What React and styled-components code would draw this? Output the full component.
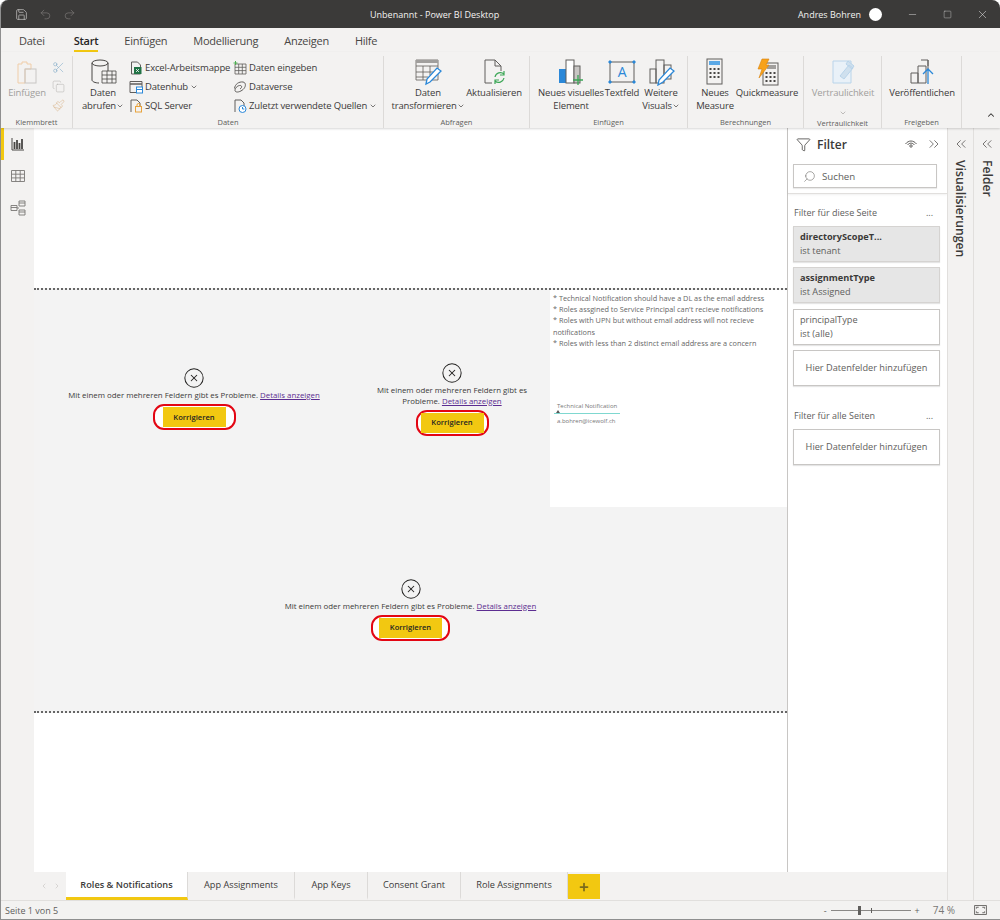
import React from "react";
import styled, { createGlobalStyle } from "styled-components";
import { ChevronDown, ChevronUp, ChevronsLeft, ChevronsRight, CircleX, Copy, Minus, Paintbrush, Redo2, Save, Scissors, Search, Square, Undo2, X, Plus, ChevronLeft, ChevronRight, Funnel } from "lucide-react";

const Global = createGlobalStyle`
html, body { margin: 0; padding: 0; width: 1000px; height: 920px; overflow: hidden; background: #fff; }
* { box-sizing: border-box; }
body { font-family: "Open Sans", "Liberation Sans", sans-serif; color: #333; }
`

const Window = styled.div`
width: 1000px;
height: 920px;
display: flex;
flex-direction: column;
background: #f3f2f1;
border-radius: 8px 8px 0 0;
border-left: 1px solid #8f8f8f;
border-bottom: 1px solid #8f8f8f;
overflow: hidden;
`

const TitleBar = styled.div`
height: 28px;
flex: none;
background: #3b3a39;
color: #f3f2f1;
display: flex;
align-items: center;
font-size: 9px;
padding-left: 14px;
`

const QuickIcons = styled.div`
width: 355px;
display: flex;
gap: 11px;
align-items: center;
color: #7a7876;
& svg:first-child { color: #c8c6c4; }
`

const UserName = styled.span`
margin-left: auto;
margin-right: 8px;
`

const Avatar = styled.span`
width: 13px;
height: 13px;
border-radius: 50%;
background: #fff;
margin-right: 13px;
`

const WinButton = styled.span`
width: 35px;
display: flex;
justify-content: center;
color: #e8e8e8;
`

const MenuBar = styled.div`
height: 24px;
flex: none;
display: flex;
gap: 26px;
padding-left: 18px;
font-size: 11px;
letter-spacing: -0.25px;
& > div:first-child { margin-right: 3px; }
`

const MenuItem = styled.div`
height: 24px;
padding-top: 5px;
line-height: 16px;
font-weight: ${p => p.$active ? 600 : 400};
color: ${p => p.$active ? "#252423" : "#484644"};
border-bottom: 2px solid ${p => p.$active ? "#f2c811" : "transparent"};
`

const Ribbon = styled.div`
height: 76px;
flex: none;
display: flex;
padding-top: 4px;
box-shadow: 0 1px 2px rgba(0,0,0,0.16);
position: relative;
z-index: 2;
`

const Group = styled.div`
width: ${p => p.$w}px;
flex: none;
display: flex;
flex-direction: column;
border-right: 1px solid #dcdad8;
`

const GroupBody = styled.div`
height: 61px;
display: flex;
padding-left: ${p => p.$pad || 0}px;
padding-top: 2px;
`

const GroupLabel = styled.div`
text-align: center;
font-size: 7.5px;
line-height: 12px;
color: #605e5c;
`

const Large = styled.div`
width: ${p => p.$w}px;
flex: none;
display: flex;
flex-direction: column;
align-items: center;
font-size: 9.5px;
line-height: 13px;
letter-spacing: -0.15px;
white-space: nowrap;
text-align: center;
color: ${p => p.$off ? "#a19f9d" : "#3b3a39"};
& > svg { height: 28px; flex: none; }
`

const SmallColumn = styled.div`
width: ${p => p.$w}px;
flex: none;
display: flex;
flex-direction: column;
`

const SmallRow = styled.div`
height: 19px;
display: flex;
align-items: center;
gap: 2px;
margin-left: -1px;
font-size: 9.5px;
letter-spacing: -0.15px;
white-space: nowrap;
color: #3b3a39;
`

const ToolIcon = styled.div`
height: 19px;
display: flex;
align-items: center;
justify-content: center;
color: #b5b3b1;
`

const Caret = styled.div`
margin-left: auto;
align-self: flex-end;
padding: 0 4px 3px 0;
color: #323130;
`

const Main = styled.div`
height: 772px;
flex: none;
display: flex;
`

const Rail = styled.div`
width: 33px;
flex: none;
display: flex;
flex-direction: column;
`

const RailItem = styled.div`
height: 32px;
display: flex;
align-items: center;
justify-content: center;
color: #797775;
border-left: 3px solid ${p => p.$active ? "#f2c811" : "transparent"};
padding-right: 3px;
`

const Center = styled.div`
width: 913px;
flex: none;
display: flex;
flex-direction: column;
`

const Work = styled.div`
height: 744px;
flex: none;
display: flex;
`

const Canvas = styled.div`
width: 753px;
flex: none;
background: #fff;
padding-top: 160px;
`

const ReportPage = styled.div`
height: 425px;
display: flex;
flex-direction: column;
background: #f3f3f3;
border-top: 2px dotted #666;
border-bottom: 2px dotted #666;
`

const TopRow = styled.div`
height: 217px;
flex: none;
display: flex;
`

const ErrorCard = styled.div`
width: ${p => p.$w ? `${p.$w}px` : "100%"};
flex: ${p => p.$w ? "none" : 1};
display: flex;
flex-direction: column;
align-items: center;
justify-content: center;
padding: 0 20px;
color: #3b3a39;
text-align: center;
font-size: 7.85px;
line-height: 11px;
`

const ErrorText = styled.div`
margin: 1px 0 3px;
`

const DetailLink = styled.span`
color: #5c2d91;
text-decoration: underline;
`

const FixRing = styled.div`
display: flex;
padding: 1px ${p => p.$pad}px;
border: 2px solid #e30613;
border-radius: 11px;
background: #fff;
`

const FixButton = styled.div`
width: 63px;
height: 20px;
display: flex;
align-items: center;
justify-content: center;
background: #f2c811;
color: #252423;
font-size: 7.6px;
font-weight: 600;
`

const NoteCard = styled.div`
flex: 1;
background: #fff;
padding: 3px 3px 0;
font-size: 7.3px;
line-height: 11.2px;
color: #666;
`

const NoteLines = styled.div`
height: 108px;
`

const MiniTable = styled.div`
margin-left: 4px;
font-size: 6px;
line-height: 10px;
color: #777;
white-space: nowrap;
`

const MiniHead = styled.div`
width: 66px;
margin-left: -3px;
padding: 0 0 2px 3px;
border-bottom: 1px solid #7fd8d0;
position: relative;
&::after {
    content: '';
    position: absolute;
    left: 2px;
    bottom: 0;
    border: 2px solid transparent;
    border-bottom: 3px solid #555;
    border-top: 0;
}
`

const MiniCell = styled.div`
padding-top: 2px;
`

const FilterPane = styled.div`
width: 160px;
flex: none;
background: #fff;
border-left: 1px solid #c8c6c4;
`

const PaneTop = styled.div`
height: 66px;
border-bottom: 1px solid #e1dfdd;
box-shadow: 0 1px 2px rgba(0,0,0,0.06);
padding: 0 5px;
`

const PaneHead = styled.div`
height: 36px;
display: flex;
align-items: center;
gap: 6px;
padding: 0 0 4px 3px;
color: #484644;
`

const PaneTitle = styled.div`
flex: 1;
font-size: 12px;
font-weight: 600;
color: #3b3a39;
`

const SearchBox = styled.div`
width: 144px;
height: 24px;
border: 1px solid #c8c6c4;
display: flex;
align-items: center;
gap: 6px;
padding-left: 9px;
font-size: 9.7px;
color: #605e5c;
box-shadow: 0 1px 1px rgba(0,0,0,0.08);
`

const PaneBody = styled.div`
padding: 11px 5px 0;
display: flex;
flex-direction: column;
gap: 5.5px;
`

const SectionHead = styled.div`
height: 14px;
margin-bottom: 1px;
margin-top: ${p => p.$gap || 0}px;
display: flex;
justify-content: space-between;
align-items: center;
padding: 0 9px 0 1px;
font-size: 9px;
color: #605e5c;
`

const FilterCard = styled.div`
width: 147px;
height: 36px;
padding: 3px 6px;
font-size: 9.2px;
line-height: 14px;
border: 1px solid ${p => p.$on ? "#d5d3d1" : "#c8c6c4"};
background: ${p => p.$on ? "#e6e6e6" : "#fff"};
color: #605e5c;
box-shadow: 0 1px 1px rgba(0,0,0,0.1);
`

const CardName = styled.div`
font-weight: ${p => p.$on ? 700 : 400};
color: ${p => p.$on ? "#3b3a39" : "#605e5c"};
`

const DropCard = styled(FilterCard)`
display: flex;
align-items: center;
justify-content: center;
padding: 0;
`

const TabBar = styled.div`
height: 28px;
flex: none;
display: flex;
align-items: stretch;
`

const TabNav = styled.div`
width: 32px;
display: flex;
align-items: center;
justify-content: center;
gap: 5px;
color: #c8c6c4;
`

const Tab = styled.div`
width: ${p => p.$w}px;
flex: none;
display: flex;
align-items: center;
justify-content: center;
font-size: 9.2px;
font-weight: ${p => p.$active ? 600 : 400};
color: #3b3a39;
background: ${p => p.$active ? "#fff" : "transparent"};
border-right: 1px solid #dcdad8;
border-bottom: 3px solid ${p => p.$active ? "#f2c811" : "transparent"};
`

const AddTab = styled.div`
width: 32px;
height: 25px;
margin-top: 2px;
display: flex;
align-items: center;
justify-content: center;
background: #f2c811;
color: #7a6a1c;
`

const SidePane = styled.div`
width: ${p => p.$w}px;
flex: none;
display: flex;
flex-direction: column;
align-items: center;
padding-top: 8px;
border-left: 1px solid #e1dfdd;
color: #484644;
`

const SideLabel = styled.div`
writing-mode: vertical-rl;
margin-top: 8px;
font-size: 12.2px;
font-weight: 600;
color: #3b3a39;
`

const StatusBar = styled.div`
flex: 1;
display: flex;
align-items: center;
padding-left: 4px;
font-size: 9px;
color: #605e5c;
border-top: 1px solid #e1dfdd;
`

const ZoomTools = styled.div`
margin-left: auto;
display: flex;
align-items: center;
gap: 4px;
padding-right: 13px;
`

const SliderTrack = styled.div`
width: 80px;
height: 1px;
background: #8a8886;
position: relative;
`

const SliderThumb = styled.div`
position: absolute;
left: 27px;
top: -4px;
width: 3px;
height: 9px;
background: #605e5c;
`

const SliderTick = styled.div`
position: absolute;
left: 40px;
top: -2px;
width: 1px;
height: 5px;
background: #605e5c;
`

const ZoomValue = styled.span`
margin: 0 15px 0 9px;
color: #797775;
font-size: 10px;
`

const gray = "#605e5c";

const PasteIcon = () => (
    <svg width="30" viewBox="0 0 30 28" fill="none">
        <path d="M6 6h4V4h5v2h4v5h-6v14H6z" stroke="#f0cda8" />
        <rect x="13" y="11" width="11" height="14" stroke="#c8c6c4" />
    </svg>
)

const DatabaseIcon = () => (
    <svg width="30" viewBox="0 0 30 28" fill="none" stroke="#484644">
        <ellipse cx="12" cy="5" rx="8" ry="3" />
        <path d="M4 5v17c0 1.5 3 3 7 3M20 5v8" />
        <path d="M14 13h14v12H14zM14 17h14M14 21h14M19 13v12M24 13v12" strokeWidth=".8" />
    </svg>
)

const ExcelIcon = () => (
    <svg width="14" height="14" viewBox="0 0 14 14" fill="none">
        <path d="M2.5 1h6l3 3v9h-9z" stroke="#605e5c" />
        <rect x="5" y="6" width="7.5" height="7" fill="#217346" />
        <path d="M7 8l3 3M10 8l-3 3" stroke="#fff" strokeWidth=".8" />
    </svg>
)

const HubIcon = () => (
    <svg width="14" height="14" viewBox="0 0 14 14" fill="none">
        <path d="M1 1.5h12v11H1z" stroke="#605e5c" />
        <path d="M1 4h12" stroke="#605e5c" strokeWidth="1.4" />
        <rect x="7.5" y="7" width="6" height="6" stroke="#2b88d8" fill="#fff" />
        <path d="M7.5 9.5h6" stroke="#2b88d8" />
    </svg>
)

const SqlIcon = () => (
    <svg width="14" height="14" viewBox="0 0 14 14" fill="none">
        <path d="M2 13V1h6l3 3v3" stroke="#605e5c" />
        <rect x="6.5" y="7.5" width="6" height="5.5" stroke="#e8a33d" />
        <path d="M8 7.5V6a1.5 1.5 0 013 0v1.5" stroke="#e8a33d" />
    </svg>
)

const EnterDataIcon = () => (
    <svg width="14" height="14" viewBox="0 0 14 14" fill="none">
        <path d="M2 3h11v10H2zM2 6.3h11M2 9.6h11M5.7 3v10M9.3 3v10" stroke="#605e5c" strokeWidth=".8" />
        <path d="M2.5 0v4M.5 2h4" stroke="#4caf50" />
    </svg>
)

const SwirlIcon = () => (
    <svg width="14" height="14" viewBox="0 0 14 14" fill="none" stroke="#605e5c">
        <path d="M1.5 8.5C2 4 6 1.5 10 2c3 .5 3 4 1 6.5-2 2.5-6.5 4.5-8.5 3C1 10.500 3 6 6.500 5.500 9 5 9.500 7.500 7 9" />
    </svg>
)

const RecentIcon = () => (
    <svg width="14" height="14" viewBox="0 0 14 14" fill="none">
        <path d="M2 13V1h6l3 3v3" stroke="#605e5c" />
        <circle cx="9.500" cy="10" r="3.500" stroke="#2b88d8" fill="#fff" />
        <path d="M9.500 8v2h1.800" stroke="#2b88d8" />
    </svg>
)

const TransformIcon = () => (
    <svg width="30" viewBox="0 0 30 28" fill="none">
        <path d="M3 2h22v20H3zM3 8h22M3 14h18M3 19h12M10 8v14M17 8v9" stroke={gray} strokeWidth=".8" />
        <path d="M3 2h22v3H3z" fill="#a19f9d" />
        <path d="M13 26l1-5L24 10l4 3-11 11z" fill="#fff" stroke="#2b88d8" strokeWidth="1.3" />
    </svg>
)

const RefreshIcon = () => (
    <svg width="30" viewBox="0 0 30 28" fill="none">
        <path d="M6 25V2h10l6 6v5M6 25h7M16 2v6h6" stroke={gray} />
        <path d="M16 19a5.500 5.500 0 019-3M25 20a5.500 5.500 0 01-9 3M25 13v4h-4M16 26v-4h4" stroke="#3aa655" strokeWidth="1.2" />
    </svg>
)

const NewVisualIcon = () => (
    <svg width="30" viewBox="0 0 30 28" fill="none">
        <rect x="3" y="11" width="7" height="14" fill="#2b88d8" />
        <rect x="10" y="2" width="8" height="23" fill="#fff" stroke={gray} />
        <rect x="18" y="8" width="6" height="17" fill="#c8c6c4" stroke={gray} />
        <path d="M22 17v10M17 22h10" stroke="#3aa655" strokeWidth="1.3" />
    </svg>
)

const TextBoxIcon = () => (
    <svg width="30" viewBox="0 0 30 28" fill="none">
        <rect x="3" y="4" width="24" height="20" stroke={gray} />
        <text x="15" y="19" textAnchor="middle" fontSize="14" fontFamily="Open Sans, sans-serif" fill="#2b88d8">A</text>
        <path d="M2 3h2v2H2zM26 3h2v2h-2zM2 23h2v2H2zM26 23h2v2h-2z" fill="#2b88d8" stroke="#2b88d8" />
    </svg>
)

const MoreVisualsIcon = () => (
    <svg width="30" viewBox="0 0 30 28" fill="none">
        <rect x="4" y="11" width="6" height="14" stroke={gray} />
        <rect x="10" y="2" width="8" height="23" stroke={gray} />
        <rect x="18" y="7" width="7" height="14" stroke={gray} />
        <path d="M12 27l1-5L24 10l4 3-11 11z" fill="#fff" stroke="#2b88d8" strokeWidth="1.3" />
    </svg>
)

const CalcKeys = ({ x, y }) => (
    <path transform={`translate(${x} ${y})`} d="M0 0h2v2H0zM4 0h2v2H4zM8 0h2v2H8zM0 4h2v2H0zM4 4h2v2H4zM8 4h2v2H8zM0 8h2v2H0zM4 8h2v2H4zM8 8h2v2H8z" fill="#484644" />
)

const MeasureIcon = () => (
    <svg width="30" viewBox="0 0 30 28" fill="none">
        <rect x="7" y="1" width="15" height="25" stroke={gray} />
        <rect x="9" y="3" width="11" height="4" fill="#5ca9e6" />
        <CalcKeys x={9.5} y={10} />
    </svg>
)

const QuickIcon = () => (
    <svg width="30" viewBox="0 0 30 28" fill="none">
        <rect x="11" y="5" width="15" height="22" stroke={gray} />
        <rect x="15" y="7" width="9" height="4" fill="#a19f9d" />
        <CalcKeys x={13.5} y={14} />
        <path d="M10 1h7l-3 6h3L7 20l3-9H6z" fill="#f7a21b" stroke="#d9820b" strokeWidth=".6" />
    </svg>
)

const SensitivityIcon = () => (
    <svg width="30" viewBox="0 0 30 28" fill="none" stroke="#b9d4ea">
        <path d="M5 3h18v22H5z" fill="#e9f1f8" />
        <path d="M12 18l9-11 4 3-9 11zM20 3l6 5-2 3-6-5z" fill="#cfe0ee" />
    </svg>
)

const PublishIcon = () => (
    <svg width="30" viewBox="0 0 30 28" fill="none">
        <path d="M4 15h7v10H4zM11 8h8v17h-8zM14 2h7v6" stroke={gray} />
        <path d="M21 2v10" stroke={gray} />
        <path d="M21 26V12M16 16l5-5 5 5" stroke="#2b88d8" strokeWidth="1.3" />
    </svg>
)

const EyeIcon = () => (
    <svg width="14" height="12" viewBox="0 0 14 12" fill="none" stroke="#605e5c">
        <path d="M1.500 6c3-4 8-4 11 0M3.500 7c2-2.500 5-2.500 7 0" />
        <circle cx="7" cy="8" r="1.200" />
    </svg>
)

const ReportIcon = () => (
    <svg width="14" height="14" viewBox="0 0 14 14" fill="none" stroke="#484644">
        <path d="M1 1v12h12" />
        <path d="M3.500 12V5M6 12V3M8.500 12V6M11 12V2" strokeWidth="1.800" />
    </svg>
)

const TableIcon = () => (
    <svg width="14" height="14" viewBox="0 0 14 14" fill="none" stroke="currentColor" strokeWidth=".9">
        <path d="M.5 1.500h13v11H.5zM.5 5.200h13M.5 8.900h13M4.800 1.500v11M9.200 1.500v11" />
    </svg>
)

const ModelIcon = () => (
    <svg width="16" height="16" viewBox="0 0 16 16" fill="none" stroke="currentColor" strokeWidth=".9">
        <path d="M9 1h6v5H9zM9 3h6M1 5.500h6v5H1zM1 7.500h6M9 10h6v5H9zM9 12h6M7 8h2" />
    </svg>
)

const FitIcon = () => (
    <svg width="13" height="10" viewBox="0 0 14 11" fill="none" stroke="#605e5c">
        <path d="M.5.500h13v10H.500z" />
        <path d="M2.500 4V2.500H5M9 2.500h2.500V4M2.500 7v1.500H5M9 8.500h2.500V7" />
    </svg>
)

const Chevron = () => <ChevronDown size={8} strokeWidth={2} style={{ verticalAlign: "-1px" }} />

const ErrorVisual = ({ w, ring }) => (
    <ErrorCard $w={w}>
        <CircleX size={22} strokeWidth={1.1} color="#252423" />
        <ErrorText>
            Mit einem oder mehreren Feldern gibt es Probleme. <DetailLink>Details anzeigen</DetailLink>
        </ErrorText>
        <FixRing $pad={ring}>
            <FixButton>Korrigieren</FixButton>
        </FixRing>
    </ErrorCard>
)

const menuItems = ["Datei", "Start", "Einfügen", "Modellierung", "Anzeigen", "Hilfe"];

const tabs = [
    { name: "Roles & Notifications", w: 122, active: true },
    { name: "App Assignments", w: 107 },
    { name: "App Keys", w: 73 },
    { name: "Consent Grant", w: 93 },
    { name: "Role Assignments", w: 107 },
];

const App = () => {
    return (
        <Window>
            <Global />
            <TitleBar>
                <QuickIcons>
                    <Save size={13} strokeWidth={1.3} />
                    <Undo2 size={13} strokeWidth={1.3} />
                    <Redo2 size={13} strokeWidth={1.3} />
                </QuickIcons>
                <span>Unbenannt - Power BI Desktop</span>
                <UserName>Andres Bohren</UserName>
                <Avatar />
                <WinButton><Minus size={11} strokeWidth={1} /></WinButton>
                <WinButton><Square size={9} strokeWidth={1} /></WinButton>
                <WinButton><X size={13} strokeWidth={1} /></WinButton>
            </TitleBar>

            <MenuBar>
                {menuItems.map(m => <MenuItem key={m} $active={m === "Start"}>{m}</MenuItem>)}
            </MenuBar>

            <Ribbon>
                <Group $w={72}>
                    <GroupBody $pad={3}>
                        <Large $w={46} $off><PasteIcon />Einfügen</Large>
                        <SmallColumn $w={16}>
                            <ToolIcon><Scissors size={13} strokeWidth={1} color="#7aa7c7" /></ToolIcon>
                            <ToolIcon><Copy size={13} strokeWidth={1} /></ToolIcon>
                            <ToolIcon><Paintbrush size={13} strokeWidth={1} color="#d9b48a" /></ToolIcon>
                        </SmallColumn>
                    </GroupBody>
                    <GroupLabel>Klemmbrett</GroupLabel>
                </Group>
                <Group $w={311}>
                    <GroupBody $pad={3}>
                        <Large $w={54}><DatabaseIcon />Daten<span>abrufen<Chevron /></span></Large>
                        <SmallColumn $w={104}>
                            <SmallRow><ExcelIcon />Excel-Arbeitsmappe</SmallRow>
                            <SmallRow><HubIcon />Datenhub <Chevron /></SmallRow>
                            <SmallRow><SqlIcon />SQL Server</SmallRow>
                        </SmallColumn>
                        <SmallColumn $w={148}>
                            <SmallRow><EnterDataIcon />Daten eingeben</SmallRow>
                            <SmallRow><SwirlIcon />Dataverse</SmallRow>
                            <SmallRow><RecentIcon />Zuletzt verwendete Quellen <Chevron /></SmallRow>
                        </SmallColumn>
                    </GroupBody>
                    <GroupLabel>Daten</GroupLabel>
                </Group>
                <Group $w={146}>
                    <GroupBody $pad={4}>
                        <Large $w={80}><TransformIcon />Daten<span>transformieren<Chevron /></span></Large>
                        <Large $w={52}><RefreshIcon />Aktualisieren</Large>
                    </GroupBody>
                    <GroupLabel>Abfragen</GroupLabel>
                </Group>
                <Group $w={158}>
                    <GroupBody $pad={6}>
                        <Large $w={70}><NewVisualIcon />Neues visuelles<br />Element</Large>
                        <Large $w={32}><TextBoxIcon />Textfeld</Large>
                        <Large $w={46}><MoreVisualsIcon />Weitere<span>Visuals<Chevron /></span></Large>
                    </GroupBody>
                    <GroupLabel>Einfügen</GroupLabel>
                </Group>
                <Group $w={116}>
                    <GroupBody $pad={4}>
                        <Large $w={46}><MeasureIcon />Neues<br />Measure</Large>
                        <Large $w={58}><QuickIcon />Quickmeasure</Large>
                    </GroupBody>
                    <GroupLabel>Berechnungen</GroupLabel>
                </Group>
                <Group $w={78}>
                    <GroupBody>
                        <Large $w={78} $off><SensitivityIcon />Vertraulichkeit<Chevron /></Large>
                    </GroupBody>
                    <GroupLabel>Vertraulichkeit</GroupLabel>
                </Group>
                <Group $w={80}>
                    <GroupBody>
                        <Large $w={80}><PublishIcon />Veröffentlichen</Large>
                    </GroupBody>
                    <GroupLabel>Freigeben</GroupLabel>
                </Group>
                <Caret><ChevronUp size={10} strokeWidth={2.5} /></Caret>
            </Ribbon>

            <Main>
                <Rail>
                    <RailItem $active><ReportIcon /></RailItem>
                    <RailItem><TableIcon /></RailItem>
                    <RailItem><ModelIcon /></RailItem>
                </Rail>

                <Center>
                    <Work>
                        <Canvas>
                            <ReportPage>
                                <TopRow>
                                    <ErrorVisual w={320} ring={8} />
                                    <ErrorVisual w={196} ring={3} />
                                    <NoteCard>
                                        <NoteLines>
                                            * Technical Notification should have a DL as the email address<br />
                                            * Roles assgined to Service Principal can't recieve notifications<br />
                                            * Roles with UPN but without email address will not recieve notifications<br />
                                            * Roles with less than 2 distinct email address are a concern
                                        </NoteLines>
                                        <MiniTable>
                                            <MiniHead>Technical Notification</MiniHead>
                                            <MiniCell>a.bohren@icewolf.ch</MiniCell>
                                        </MiniTable>
                                    </NoteCard>
                                </TopRow>
                                <ErrorVisual ring={6} />
                            </ReportPage>
                        </Canvas>

                        <FilterPane>
                            <PaneTop>
                                <PaneHead>
                                    <Funnel size={15} strokeWidth={1.3} />
                                    <PaneTitle>Filter</PaneTitle>
                                    <EyeIcon />
                                    <ChevronsRight size={16} strokeWidth={1.1} style={{ marginLeft: 2 }} />
                                </PaneHead>
                                <SearchBox>
                                    <Search size={13} strokeWidth={1} style={{ transform: "scaleX(-1)" }} />
                                    Suchen
                                </SearchBox>
                            </PaneTop>
                            <PaneBody>
                                <SectionHead>Filter für diese Seite<span>...</span></SectionHead>
                                <FilterCard $on>
                                    <CardName $on>directoryScopeT...</CardName>
                                    ist tenant
                                </FilterCard>
                                <FilterCard $on>
                                    <CardName $on>assignmentType</CardName>
                                    ist Assigned
                                </FilterCard>
                                <FilterCard>
                                    <CardName>principalType</CardName>
                                    ist (alle)
                                </FilterCard>
                                <DropCard>Hier Datenfelder hinzufügen</DropCard>
                                <SectionHead $gap={17}>Filter für alle Seiten<span>...</span></SectionHead>
                                <DropCard>Hier Datenfelder hinzufügen</DropCard>
                            </PaneBody>
                        </FilterPane>
                    </Work>

                    <TabBar>
                        <TabNav>
                            <ChevronLeft size={8} strokeWidth={2} />
                            <ChevronRight size={8} strokeWidth={2} />
                        </TabNav>
                        {tabs.map(t => <Tab key={t.name} $w={t.w} $active={t.active}>{t.name}</Tab>)}
                        <AddTab><Plus size={12} strokeWidth={3.5} /></AddTab>
                    </TabBar>
                </Center>

                <SidePane $w={26}>
                    <ChevronsLeft size={16} strokeWidth={1.1} />
                    <SideLabel>Visualisierungen</SideLabel>
                </SidePane>
                <SidePane $w={27}>
                    <ChevronsLeft size={16} strokeWidth={1.1} />
                    <SideLabel>Felder</SideLabel>
                </SidePane>
            </Main>

            <StatusBar>
                Seite 1 von 5
                <ZoomTools>
                    <span>-</span>
                    <SliderTrack><SliderThumb /><SliderTick /></SliderTrack>
                    <span>+</span>
                    <ZoomValue>74 %</ZoomValue>
                    <FitIcon />
                </ZoomTools>
            </StatusBar>
        </Window>
    )
}

export default App;
